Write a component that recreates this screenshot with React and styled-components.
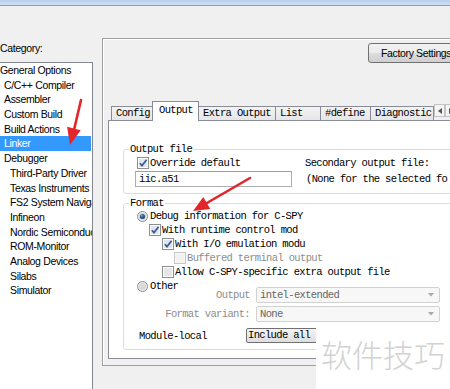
import React from 'react';
import styled, { createGlobalStyle } from 'styled-components';

const MONO = '"Liberation Mono", "DejaVu Sans Mono", monospace';
const SANS = '"Liberation Sans", Arial, sans-serif';
const MONO_SIZE = '10.5px';
const MONO_SPACING = '-0.65px';

const Global = createGlobalStyle`
  html, body { margin: 0; padding: 0; }
  body { width: 450px; height: 389px; overflow: hidden; background: #f0f0f0; font-family: ${SANS}; }
  #root { width: 450px; height: 389px; overflow: hidden; }
  * { box-sizing: border-box; }
`;

const Screen = styled.div`
  position: relative;
  width: 450px;
  height: 389px;
  overflow: hidden;
  display: flex;
  flex-direction: column;
  background: #f0f0f0;
`;

const TitleStrip = styled.div`
  flex: none;
  height: 6px;
  background: linear-gradient(#b7cfe9, #cfe0f3);
  border-bottom: 1px solid #8c9db3;
`;

const Body = styled.div`
  flex: 1;
  min-height: 0;
  display: flex;
  align-items: flex-start;
`;

const Sidebar = styled.div`
  flex: none;
  width: 93px;
  display: flex;
  flex-direction: column;
`;

const CategoryLabel = styled.div`
  margin-top: 35px;
  height: 14px;
  line-height: 14px;
  font-size: 10.5px;
  letter-spacing: -0.35px;
  color: #000;
  white-space: nowrap;
`;

const CategoryList = styled.ul`
  list-style: none;
  margin: 7px 0 0;
  padding: 0;
  height: 340px;
  background: #fff;
  border-top: 1px solid #828790;
  border-right: 1px solid #828790;
  overflow: hidden;
`;

const CategoryItem = styled.li`
  height: 14.7px;
  line-height: 14.7px;
  padding-left: ${(p) => [0, 4, 10][p.$level]}px;
  margin-right: ${(p) => (p.$selected ? 1 : 0)}px;
  font-size: 10.5px;
  letter-spacing: -0.35px;
  white-space: nowrap;
  overflow: hidden;
  color: ${(p) => (p.$selected ? '#fff' : '#000')};
  background: ${(p) => (p.$selected ? '#3399ff' : 'transparent')};
`;

const Panel = styled.section`
  flex: none;
  margin: 32px 0 0 9px;
  width: 370px;
  height: 328px;
  border: 1px solid #a0a0a0;
  box-shadow: inset 1px 1px 0 #fff;
  padding: 4px 0 0 5px;
  display: flex;
  flex-direction: column;
`;

const ButtonRow = styled.div`
  display: flex;
  justify-content: flex-end;
  padding-right: 8px;
`;

const PushButton = styled.button`
  width: 95px;
  height: 20px;
  padding: 0 0 0 12px;
  text-align: left;
  border: 1px solid #707070;
  border-radius: 3px;
  background: linear-gradient(#f2f2f2 0%, #ebebeb 50%, #dddddd 51%, #cfcfcf 100%);
  font-family: ${SANS};
  font-size: 10.5px;
  letter-spacing: -0.35px;
  color: #000;
  white-space: nowrap;
  overflow: hidden;
`;

const TabStrip = styled.div`
  position: relative;
  z-index: 1;
  margin-top: 38px;
  margin-bottom: -1px;
  height: 20px;
  display: flex;
  align-items: flex-end;
  padding-left: 3px;
`;

const Tab = styled.div`
  position: relative;
  flex: none;
  width: ${(p) => p.$w}px;
  height: ${(p) => (p.$active ? 20 : 15)}px;
  margin-left: ${(p) => (p.$first ? 0 : -1)}px;
  z-index: ${(p) => (p.$active ? 2 : 1)};
  padding-left: ${(p) => (p.$active ? 6 : 4)}px;
  border: 1px solid #898c95;
  border-bottom: ${(p) => (p.$active ? 'none' : '1px solid #898c95')};
  background: ${(p) => (p.$active ? '#fff' : 'linear-gradient(#f3f3f3, #e6e6e6)')};
  font-family: ${MONO};
  font-size: ${MONO_SIZE};
  letter-spacing: ${MONO_SPACING};
  line-height: ${(p) => (p.$active ? 17 : 13)}px;
  color: #000;
  white-space: nowrap;
  overflow: hidden;
`;

const ScrollButton = styled.div`
  flex: none;
  align-self: flex-start;
  margin-top: 3px;
  width: 11px;
  height: 13px;
  border: 1px solid #c3c3c3;
  background: #f4f4f4;
  display: flex;
  align-items: center;
  justify-content: center;
`;

const Pane = styled.div`
  height: 239px;
  border: 1px solid #898c95;
  background: #fff;
  padding: 28px 0 0 14px;
  overflow: hidden;
`;

const GroupBox = styled.div`
  position: relative;
  margin-top: ${(p) => p.$top || 0}px;
  margin-right: 10px;
  border: 1px solid #d5dfe5;
  border-radius: 3px;
  padding: ${(p) => p.$pad};
`;

const Legend = styled.span`
  position: absolute;
  top: -7px;
  left: 5px;
  padding: 0 1px;
  background: #fff;
  font-family: ${MONO};
  font-size: ${MONO_SIZE};
  letter-spacing: ${MONO_SPACING};
  line-height: 12px;
  color: #000;
  white-space: nowrap;
`;

const OutputGrid = styled.div`
  display: grid;
  grid-template-columns: 157px auto;
  grid-template-rows: 14px 16px;
  column-gap: 13px;
  row-gap: 1px;
  align-items: center;
`;

const Text = styled.span`
  font-family: ${MONO};
  font-size: ${MONO_SIZE};
  letter-spacing: ${MONO_SPACING};
  line-height: 14px;
  color: ${(p) => (p.$disabled ? '#8d8d8d' : '#000')};
  white-space: nowrap;
  padding-left: ${(p) => p.$pl || 0}px;
  text-align: ${(p) => p.$align || 'left'};
`;

const OptionRow = styled.label`
  display: flex;
  align-items: center;
  gap: ${(p) => p.$gap || 1}px;
  height: 14px;
  padding-left: ${(p) => p.$indent || 0}px;
`;

const TextInput = styled.div`
  height: 16px;
  border: 1px solid #abadb3;
  border-top-color: #9da0a8;
  background: #fff;
  padding-left: 3px;
  font-family: ${MONO};
  font-size: ${MONO_SIZE};
  letter-spacing: ${MONO_SPACING};
  line-height: 14px;
  color: #000;
  white-space: nowrap;
`;

const DropRows = styled.div`
  margin-top: -6px;
  display: grid;
  grid-template-columns: 113px 184px;
  grid-auto-rows: 16px;
  column-gap: 6px;
  row-gap: 3px;
  align-items: center;
`;

const Select = styled.div`
  height: 16px;
  border: 1px solid #d2d2d2;
  border-radius: 2px;
  background: #f7f7f7;
  display: flex;
  align-items: center;
  justify-content: space-between;
  padding: 0 5px 0 3px;
  font-family: ${MONO};
  font-size: ${MONO_SIZE};
  letter-spacing: ${MONO_SPACING};
  color: #666;
  white-space: nowrap;
`;

const ModuleRow = styled.div`
  margin-top: 6px;
  display: flex;
  align-items: center;
  height: 15px;
`;

const ModuleLabel = styled.span`
  flex: none;
  width: 109px;
  padding-left: 2px;
  font-family: ${MONO};
  font-size: ${MONO_SIZE};
  letter-spacing: ${MONO_SPACING};
  color: #000;
  white-space: nowrap;
`;

const Combo = styled.div`
  flex: none;
  width: 150px;
  height: 15px;
  border: 1px solid #707070;
  border-radius: 2px;
  background: linear-gradient(#f4f4f4, #dedede);
  padding-left: 1px;
  font-family: ${MONO};
  font-size: ${MONO_SIZE};
  letter-spacing: ${MONO_SPACING};
  line-height: 13px;
  color: #000;
  white-space: nowrap;
`;

const Watermark = styled.div`
  position: absolute;
  left: 316px;
  top: 322px;
  width: 134px;
  height: 67px;
  background: #fff;
  display: flex;
  align-items: center;
  justify-content: center;
  padding-bottom: 4px;
  font-family: "Noto Sans CJK SC", "Noto Sans", sans-serif;
  font-weight: 300;
  font-size: 31px;
  color: #d2d2d2;
  white-space: nowrap;
`;

const ArrowLayer = styled.svg`
  position: absolute;
  left: 0;
  top: 0;
  pointer-events: none;
`;

function CheckBox({ checked, disabled }) {
  return (
    <svg width="12" height="12" viewBox="0 0 12 12" style={{ flex: 'none' }}>
      <rect x="0.5" y="0.5" width="11" height="11" fill={disabled ? '#f7f7f7' : '#fff'} stroke={disabled ? '#c6c6c6' : '#8e8f8f'} />
      <rect x="2" y="2" width="8" height="8" fill={disabled ? '#f2f2f2' : checked ? '#dde6f2' : '#e6e6e6'} />
      {checked && <path d="M2.8 6.2 L5 8.6 L9.6 2.8" fill="none" stroke="#3d5a95" strokeWidth="1.7" />}
    </svg>
  );
}

function Radio({ checked }) {
  return (
    <svg width="11" height="11" viewBox="0 0 11 11" style={{ flex: 'none' }}>
      <circle cx="5.5" cy="5.5" r="5" fill="#ececec" stroke="#8e8f8f" />
      <circle cx="5.5" cy="5.5" r="3.6" fill="#d9d9d9" />
      {checked && <circle cx="5.5" cy="5.5" r="2.6" fill="#2c5a86" />}
      {checked && <circle cx="4.9" cy="4.8" r="1" fill="#7fa9d0" />}
    </svg>
  );
}

function DropArrow() {
  return (
    <svg width="6" height="4" viewBox="0 0 6 4">
      <path d="M0 0 L6 0 L3 3.5 Z" fill="#a8a8a8" />
    </svg>
  );
}

function TriGlyph({ dir }) {
  return (
    <svg width="4" height="6" viewBox="0 0 4 6">
      <path d={dir === 'left' ? 'M4 0 L4 6 L0 3 Z' : 'M0 0 L0 6 L4 3 Z'} fill="#555" />
    </svg>
  );
}

const categories = [
  ['General Options', 0],
  ['C/C++ Compiler', 1],
  ['Assembler', 1],
  ['Custom Build', 1],
  ['Build Actions', 1],
  ['Linker', 1, true],
  ['Debugger', 1],
  ['Third-Party Driver', 2],
  ['Texas Instruments', 2],
  ['FS2 System Navigator', 2],
  ['Infineon', 2],
  ['Nordic Semiconductor', 2],
  ['ROM-Monitor', 2],
  ['Analog Devices', 2],
  ['Silabs', 2],
  ['Simulator', 2],
];

const tabs = [
  ['Config', 42],
  ['Output', 47, true],
  ['Extra Output', 78],
  ['List', 46],
  ['#define', 51],
  ['Diagnostic', 64],
];

export default function App() {
  return (
    <>
      <Global />
      <Screen>
        <TitleStrip />
        <Body>
          <Sidebar>
            <CategoryLabel>Category:</CategoryLabel>
            <CategoryList>
              {categories.map(([name, level, sel]) => (
                <CategoryItem key={name} $level={level} $selected={!!sel}>
                  {name}
                </CategoryItem>
              ))}
            </CategoryList>
          </Sidebar>
          <Panel>
            <ButtonRow>
              <PushButton>Factory Settings</PushButton>
            </ButtonRow>
            <TabStrip>
              {tabs.map(([name, w, active], i) => (
                <Tab key={name} $w={w} $active={!!active} $first={i === 0}>
                  {name}
                </Tab>
              ))}
              <ScrollButton>
                <TriGlyph dir="left" />
              </ScrollButton>
              <ScrollButton>
                <TriGlyph dir="right" />
              </ScrollButton>
            </TabStrip>
            <Pane>
              <GroupBox $pad="6px 0 6px 11px">
                <Legend>Output file</Legend>
                <OutputGrid>
                  <OptionRow $indent={2}>
                    <CheckBox checked />
                    <Text>Override default</Text>
                  </OptionRow>
                  <Text>Secondary output file:</Text>
                  <TextInput>iic.a51</TextInput>
                  <Text $pl={1}>(None for the selected fo</Text>
                </OutputGrid>
              </GroupBox>
              <GroupBox $top={9} $pad="5px 0 6px 13px">
                <Legend>Format</Legend>
                <OptionRow $gap={2}>
                  <Radio checked />
                  <Text>Debug information for C-SPY</Text>
                </OptionRow>
                <OptionRow $indent={12}>
                  <CheckBox checked />
                  <Text>With runtime control mod</Text>
                </OptionRow>
                <OptionRow $indent={25}>
                  <CheckBox checked />
                  <Text>With I/O emulation modu</Text>
                </OptionRow>
                <OptionRow $indent={37}>
                  <CheckBox disabled />
                  <Text $disabled>Buffered terminal output</Text>
                </OptionRow>
                <OptionRow $indent={25}>
                  <CheckBox />
                  <Text>Allow C-SPY-specific extra output file</Text>
                </OptionRow>
                <OptionRow $gap={2}>
                  <Radio />
                  <Text>Other</Text>
                </OptionRow>
                <DropRows>
                  <Text $disabled $align="right">Output</Text>
                  <Select>
                    <span>intel-extended</span>
                    <DropArrow />
                  </Select>
                  <Text $disabled $align="right">Format variant:</Text>
                  <Select>
                    <span>None</span>
                    <DropArrow />
                  </Select>
                </DropRows>
                <ModuleRow>
                  <ModuleLabel>Module-local</ModuleLabel>
                  <Combo>Include all</Combo>
                </ModuleRow>
              </GroupBox>
            </Pane>
          </Panel>
        </Body>
        <Watermark>软件技巧</Watermark>
        <ArrowLayer width="450" height="389" viewBox="0 0 450 389">
          <line x1="81" y1="100" x2="74" y2="130" stroke="#e3262b" strokeWidth="2.6" strokeLinecap="round" />
          <polygon points="70,145 80.7,130.2 67.1,126.8" fill="#e3262b" />
          <line x1="250" y1="178" x2="206" y2="203.5" stroke="#e3262b" strokeWidth="2.6" strokeLinecap="round" />
          <polygon points="193,211 210.3,209.1 203.3,196.9" fill="#e3262b" />
        </ArrowLayer>
      </Screen>
    </>
  );
}
